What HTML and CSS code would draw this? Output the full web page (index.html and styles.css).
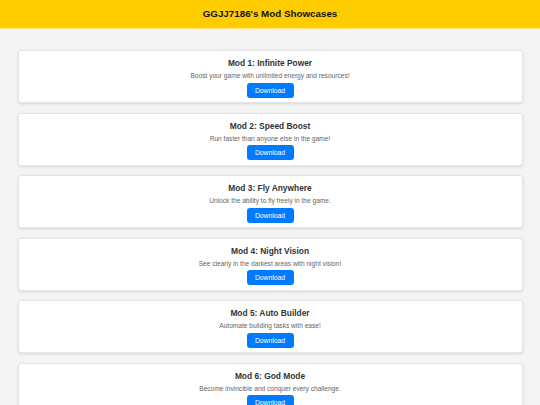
FILE: index.html
```html
<!DOCTYPE html>
<html>
<head>
<meta charset="utf-8">
<link rel="stylesheet" href="styles.css">
</head>
<body>
<header class="top">
  <h1 class="top-title">GGJJ7186's Mod Showcases</h1>
</header>
<main class="list">
  <section class="card">
    <h2 class="card-title">Mod 1: Infinite Power</h2>
    <p class="card-desc">Boost your game with unlimited energy and resources!</p>
    <button class="btn">Download</button>
  </section>
  <section class="card">
    <h2 class="card-title">Mod 2: Speed Boost</h2>
    <p class="card-desc">Run faster than anyone else in the game!</p>
    <button class="btn">Download</button>
  </section>
  <section class="card">
    <h2 class="card-title">Mod 3: Fly Anywhere</h2>
    <p class="card-desc">Unlock the ability to fly freely in the game.</p>
    <button class="btn">Download</button>
  </section>
  <section class="card">
    <h2 class="card-title">Mod 4: Night Vision</h2>
    <p class="card-desc">See clearly in the darkest areas with night vision!</p>
    <button class="btn">Download</button>
  </section>
  <section class="card">
    <h2 class="card-title">Mod 5: Auto Builder</h2>
    <p class="card-desc">Automate building tasks with ease!</p>
    <button class="btn">Download</button>
  </section>
  <section class="card">
    <h2 class="card-title">Mod 6: God Mode</h2>
    <p class="card-desc">Become invincible and conquer every challenge.</p>
    <button class="btn">Download</button>
  </section>
</main>
</body>
</html>
```
FILE: styles.css
```css
html, body {
  margin: 0;
  padding: 0;
}
body {
  background: #f4f4f4;
  font-family: "Liberation Sans", Arial, sans-serif;
  color: #333;
}
.top {
  background: #ffcc00;
  height: 28px;
  border-bottom: 1px solid #ffe27a;
  display: flex;
  align-items: center;
  justify-content: center;
}
.top-title {
  margin: 0;
  font-size: 9.8px;
  font-weight: bold;
  color: #111;
  line-height: 12px;
}
.list {
  padding: 21px 17.5px 0;
  display: flex;
  flex-direction: column;
  gap: 9.5px;
}
.card {
  background: #fff;
  border: 1px solid #e6e6e6;
  border-radius: 3px;
  box-shadow: 0 1px 3px rgba(0, 0, 0, 0.12);
  height: 53px;
  box-sizing: border-box;
  padding: 6px 10px 0;
  display: flex;
  flex-direction: column;
  align-items: center;
}
.card-title {
  margin: 0;
  font-size: 8.4px;
  line-height: 12px;
  font-weight: bold;
  color: #333;
}
.card-desc {
  margin: 2px 0 1.5px;
  font-size: 6.6px;
  line-height: 10px;
  color: #666;
}
.btn {
  font-family: "Liberation Sans", Arial, sans-serif;
  background: #007bff;
  color: #fff;
  border: none;
  border-radius: 3px;
  width: 47px;
  height: 15px;
  padding: 0;
  font-size: 6.8px;
  line-height: 15px;
}
```
